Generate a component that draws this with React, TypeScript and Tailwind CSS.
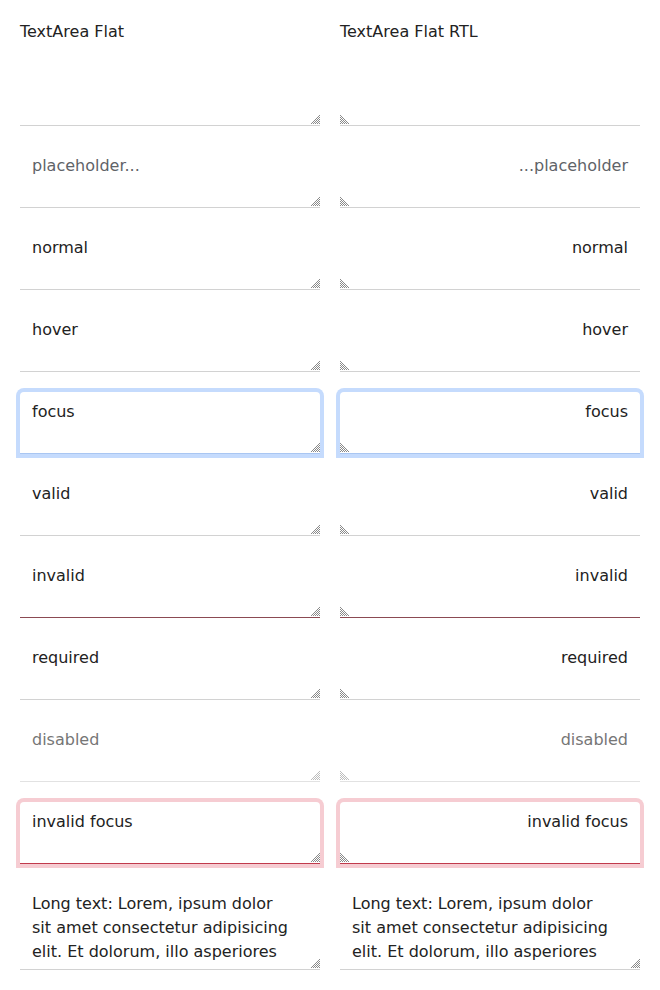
type State =
  | 'empty'
  | 'placeholder'
  | 'normal'
  | 'hover'
  | 'focus'
  | 'valid'
  | 'invalid'
  | 'required'
  | 'disabled'
  | 'invalidFocus'
  | 'long';

const LONG =
  'Long text: Lorem, ipsum dolor sit amet consectetur adipisicing elit. Et dolorum, illo asperiores';

const rows: { state: State; text: string }[] = [
  { state: 'empty', text: '' },
  { state: 'placeholder', text: '' },
  { state: 'normal', text: 'normal' },
  { state: 'hover', text: 'hover' },
  { state: 'focus', text: 'focus' },
  { state: 'valid', text: 'valid' },
  { state: 'invalid', text: 'invalid' },
  { state: 'required', text: 'required' },
  { state: 'disabled', text: 'disabled' },
  { state: 'invalidFocus', text: 'invalid focus' },
  { state: 'long', text: LONG },
];

// hatched resize grip, mirrored for rtl
function Grip({ rtl, faded }: { rtl?: boolean; faded?: boolean }) {
  return (
    <svg
      width="10"
      height="10"
      viewBox="0 0 10 10"
      className={[
        'pointer-events-none absolute bottom-[2px]',
        rtl ? 'left-0 -scale-x-100' : 'right-0',
      ].join(' ')}
    >
      {[1, 3, 5, 7, 9].map((i) => (
        <path
          key={i}
          d={`M${i} 10 L10 ${i}`}
          stroke={faded ? '#bdbdbd' : '#8a8a8a'}
          strokeWidth="1"
          shapeRendering="crispEdges"
        />
      ))}
    </svg>
  );
}

function FlatArea({ state, text, rtl }: { state: State; text: string; rtl?: boolean }) {
  const tone =
    state === 'focus'
      ? 'border-b-[#a9c6f2] shadow-[0_0_0_4px_#c5dbfd]'
      : state === 'invalidFocus'
        ? 'border-b-[#c13a4c] shadow-[0_0_0_4px_#f6ccd2]'
        : state === 'invalid'
          ? 'border-b-[#8b4a52]'
          : state === 'disabled'
            ? 'border-b-[#e2e2e2] text-[#767676]'
            : 'border-b-[#d2d2d2]';
  // the long-text sample in the rtl column is rendered ltr
  const isRtl = rtl && state !== 'long';
  return (
    <div className="relative">
      <textarea
        dir={isRtl ? 'rtl' : 'ltr'}
        rows={state === 'long' ? 3 : 2}
        defaultValue={text}
        placeholder={state === 'placeholder' ? 'placeholder...' : undefined}
        disabled={state === 'disabled'}
        required={state === 'required'}
        className={[
          'block w-full resize-none overflow-hidden rounded-t-[4px] border-0 border-b bg-white pl-3 pt-2 pb-[5px]',
          'text-[16px] leading-6 text-[#222] outline-none placeholder:text-[#5f6368]',
          state === 'long' ? 'h-[86px] pr-[28px]' : 'h-[62px] pr-3',
          tone,
        ].join(' ')}
      />
      <Grip rtl={isRtl} faded={state === 'disabled'} />
    </div>
  );
}

function Column({ title, rtl }: { title: string; rtl?: boolean }) {
  return (
    <div className="flex w-[300px] flex-col gap-5">
      <h2 className="text-[16px] leading-6 text-[#222]">{title}</h2>
      {rows.map((r) => (
        <FlatArea key={r.state} state={r.state} text={r.text} rtl={rtl} />
      ))}
    </div>
  );
}

export default function App() {
  return (
    <div className="min-h-screen bg-white p-5 font-['DejaVu_Sans',sans-serif]">
      <div className="flex gap-5">
        <Column title="TextArea Flat" />
        <Column title="TextArea Flat RTL" rtl />
      </div>
    </div>
  );
}
